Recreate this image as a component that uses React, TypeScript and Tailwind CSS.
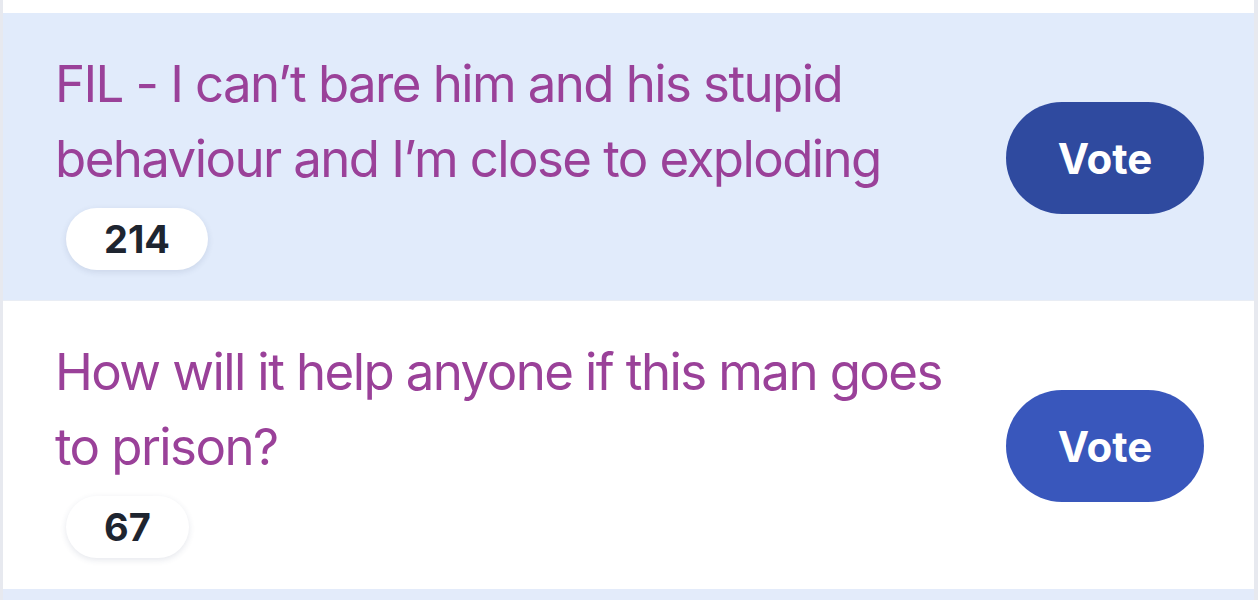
import React from "react";

interface Question {
  id: number;
  title: string;
  votes: number;
  highlighted?: boolean;
}

const questions: Question[] = [
  {
    id: 1,
    title: "FIL - I can\u2019t bare him and his stupid behaviour and I\u2019m close to exploding",
    votes: 214,
    highlighted: true,
  },
  {
    id: 2,
    title: "How will it help anyone if this man goes to prison?",
    votes: 67,
  },
];

function QuestionRow({ q }: { q: Question }) {
  return (
    <div
      className={
        q.highlighted
          ? "flex items-center justify-between bg-[#e1ebfb] pl-[52px] pr-[50px] pt-[33px] pb-[30px]"
          : "flex items-center justify-between bg-white pl-[52px] pr-[50px] pt-[33px] pb-[31px] border-t border-[#e9edf4]"
      }
    >
      <div className="w-[925px]">
        <p className="text-[51px] leading-[75px] text-[#9a4199] tracking-[-1.6px]">{q.title}</p>
        <div className="mt-[12px] ml-[11px] inline-flex h-[62px] items-center rounded-full bg-white px-[38px] shadow-[0_2px_6px_rgba(40,60,100,0.12)]">
          <span className="text-[38px] font-bold text-[#1e2530]">{q.votes}</span>
        </div>
      </div>
      <button
        className={
          q.highlighted
            ? "h-[112px] w-[198px] rounded-full bg-[#2f4a9f] text-[42px] font-bold text-white"
            : "h-[112px] w-[198px] rounded-full bg-[#3957bc] text-[42px] font-bold text-white"
        }
      >
        Vote
      </button>
    </div>
  );
}

export default function App() {
  return (
    <div className="h-[600px] w-[1258px] overflow-hidden bg-[#e7e9ef] pl-[3px] pr-[4px] font-['Inter',sans-serif]">
      <div className="h-[13px] bg-white" />
      {questions.map((q) => (
        <QuestionRow key={q.id} q={q} />
      ))}
      <div className="h-[20px] bg-[#e3ebfa]" />
    </div>
  );
}
